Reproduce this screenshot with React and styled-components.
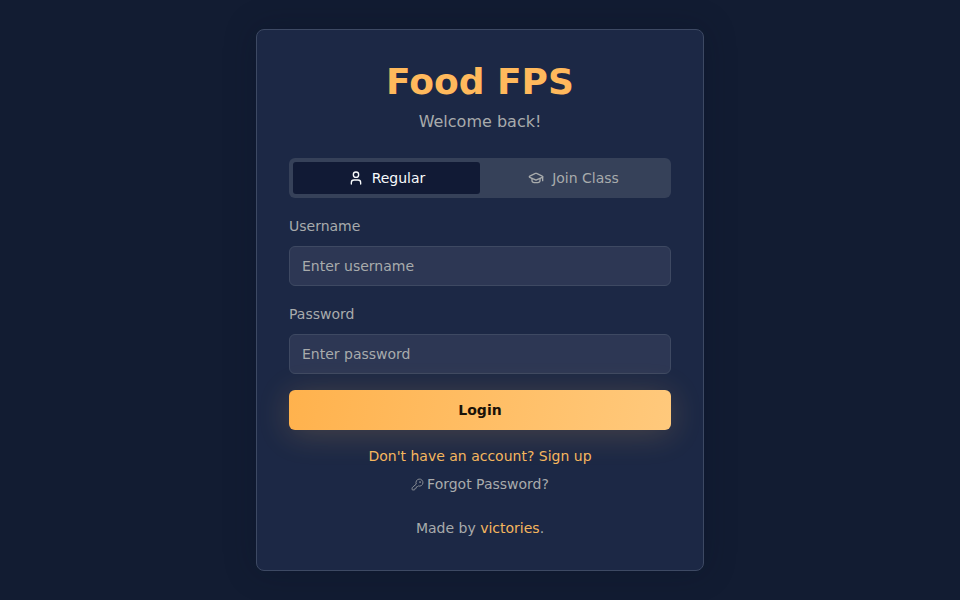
import React from 'react';
import styled, { createGlobalStyle } from 'styled-components';
import { User, GraduationCap, KeyRound } from 'lucide-react';

const Global = createGlobalStyle`
  * { box-sizing: border-box; }
  html, body { margin: 0; padding: 0; }
  body { font-family: "DejaVu Sans", sans-serif; background: #121c32; }
`;

const Page = styled.main`
  min-height: 600px;
  display: flex;
  align-items: center;
  justify-content: center;
  background: #121c32;
`;

const Card = styled.section`
  width: 448px;
  height: 542px;
  padding: 32px;
  display: flex;
  flex-direction: column;
  background: #1c2845;
  border: 1px solid #3d4963;
  border-radius: 8px;
  box-shadow: 0 0 32px rgba(8, 14, 34, 0.25);
`;

const Title = styled.h1`
  margin: 0;
  font-size: 36px;
  line-height: 40px;
  font-weight: 700;
  text-align: center;
  color: #ffb95c;
`;

const Subtitle = styled.p`
  margin: 8px 0 0;
  font-size: 16px;
  line-height: 24px;
  text-align: center;
  color: #a8abac;
`;

const Tabs = styled.div`
  margin-top: 24px;
  height: 40px;
  padding: 4px;
  display: grid;
  grid-template-columns: 1fr 1fr;
  background: #364159;
  border-radius: 6px;
`;

const Tab = styled.button`
  display: flex;
  align-items: center;
  justify-content: center;
  gap: 8px;
  border: 0;
  padding: 0;
  border-radius: 3px;
  font: 14px/20px "DejaVu Sans", sans-serif;
  background: ${p => (p.$active ? '#111a35' : 'transparent')};
  color: ${p => (p.$active ? '#f8fafc' : '#a8abac')};
`;

const Field = styled.div`
  margin-top: 18px;
  display: flex;
  flex-direction: column;
  gap: 10px;
`;

const Label = styled.label`
  font-size: 14px;
  line-height: 20px;
  color: #a8abac;
`;

const Input = styled.input`
  height: 40px;
  padding: 0 12px;
  background: #2d3754;
  border: 1px solid #3e4962;
  border-radius: 6px;
  font: 14px/20px "DejaVu Sans", sans-serif;
  color: #f8fafc;
  &::placeholder { color: #a8abac; opacity: 1; }
`;

const LoginButton = styled.button`
  margin-top: 16px;
  height: 40px;
  border: 0;
  border-radius: 6px;
  background: linear-gradient(100deg, #ffb24d, #ffc97c);
  box-shadow: 0 4px 32px rgba(255, 185, 92, 0.2);
  font: 700 14px/20px "DejaVu Sans", sans-serif;
  color: #1a1208;
`;

const Links = styled.div`
  margin-top: 16px;
  display: flex;
  flex-direction: column;
  align-items: center;
  gap: 8px;
  font-size: 14px;
  line-height: 20px;
`;

const Accent = styled.a`
  color: #f5b65e;
`;

const Muted = styled.a`
  display: flex;
  align-items: center;
  gap: 3px;
  color: #a8abac;
`;

const Footer = styled.p`
  margin: 24px 0 0;
  font-size: 14px;
  line-height: 20px;
  text-align: center;
  color: #a8abac;
`;

export default function App() {
  return (
    <>
      <Global />
      <Page>
        <Card>
          <Title>Food FPS</Title>
          <Subtitle>Welcome back!</Subtitle>
          <Tabs>
            <Tab $active><User size={16} />Regular</Tab>
            <Tab><GraduationCap size={16} />Join Class</Tab>
          </Tabs>
          <Field>
            <Label>Username</Label>
            <Input placeholder="Enter username" />
          </Field>
          <Field>
            <Label>Password</Label>
            <Input placeholder="Enter password" type="password" />
          </Field>
          <LoginButton>Login</LoginButton>
          <Links>
            <Accent>Don't have an account? Sign up</Accent>
            <Muted><KeyRound size={13} strokeWidth={1.4} />Forgot Password?</Muted>
          </Links>
          <Footer>Made by <Accent>victories</Accent>.</Footer>
        </Card>
      </Page>
    </>
  );
}
